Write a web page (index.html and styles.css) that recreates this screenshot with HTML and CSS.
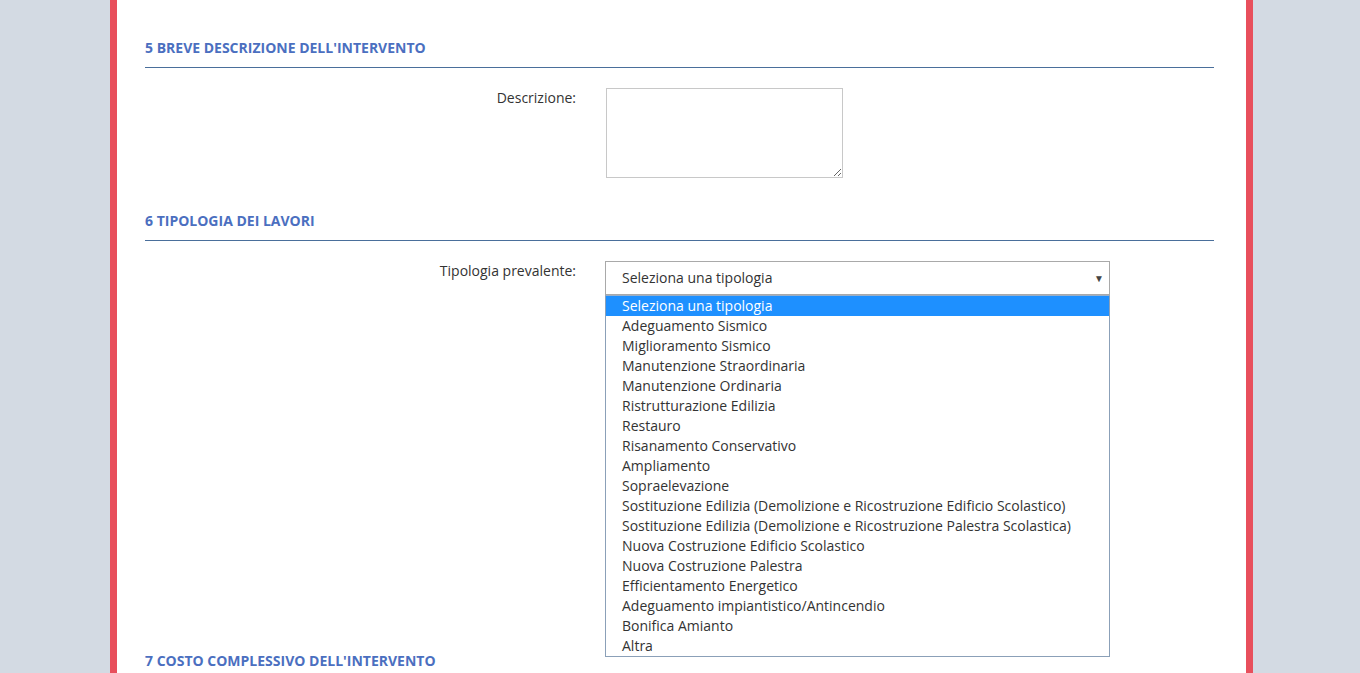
FILE: index.html
```html
<!DOCTYPE html>
<html lang="it">
<head>
    <meta charset="UTF-8">
    <title>Scheda intervento</title>
    <link rel="stylesheet" href="styles.css">
</head>
<body>
    <div class="page">
        <div class="section">
            <h2 class="section-title">5 Breve descrizione dell'intervento</h2>
            <div class="form-row">
                <label class="form-label" for="descrizione">Descrizione:</label>
                <textarea id="descrizione" class="form-textarea"></textarea>
            </div>
        </div>

        <div class="section section-tipologia">
            <h2 class="section-title">6 Tipologia dei lavori</h2>
            <div class="form-row">
                <label class="form-label">Tipologia prevalente:</label>
                <div class="select-wrap">
                    <div class="select-box">
                        <span>Seleziona una tipologia</span>
                        <span class="select-arrow">&#9660;</span>
                    </div>
                    <!-- lista aperta del menu a tendina -->
                    <ul class="select-list">
                        <li class="selected">Seleziona una tipologia</li>
                        <li>Adeguamento Sismico</li>
                        <li>Miglioramento Sismico</li>
                        <li>Manutenzione Straordinaria</li>
                        <li>Manutenzione Ordinaria</li>
                        <li>Ristrutturazione Edilizia</li>
                        <li>Restauro</li>
                        <li>Risanamento Conservativo</li>
                        <li>Ampliamento</li>
                        <li>Sopraelevazione</li>
                        <li>Sostituzione Edilizia (Demolizione e Ricostruzione Edificio Scolastico)</li>
                        <li>Sostituzione Edilizia (Demolizione e Ricostruzione Palestra Scolastica)</li>
                        <li>Nuova Costruzione Edificio Scolastico</li>
                        <li>Nuova Costruzione Palestra</li>
                        <li>Efficientamento Energetico</li>
                        <li>Adeguamento impiantistico/Antincendio</li>
                        <li>Bonifica Amianto</li>
                        <li>Altra</li>
                    </ul>
                </div>
            </div>
        </div>

        <div class="section section-last">
            <h2 class="section-title">7 Costo complessivo dell'intervento</h2>
        </div>
    </div>
</body>
</html>
```

FILE: styles.css
```css
/* Genel stiller */
body {
    margin: 0;
    font-family: "Open Sans", "Liberation Sans", sans-serif;
    font-size: 14px;
    color: #333;
    background-color: #d3dae3;
    overflow: hidden;
}

/* contenitore centrale con bordi rossi */
.page {
    box-sizing: border-box;
    width: 1143px;
    min-height: 673px;
    margin-left: 110px;
    padding: 39px 32px 0 28px;
    background-color: #fff;
    border-left: 7px solid #e84f5c;
    border-right: 7px solid #e84f5c;
}

.section {
    margin-bottom: 34px;
}

.section-tipologia {
    margin-bottom: 357px;
}

.section-last {
    margin-bottom: 0;
}

.section-title {
    margin: 0;
    padding-bottom: 10px;
    font-size: 14px;
    line-height: 18px;
    font-weight: bold;
    text-transform: uppercase;
    color: #4b6fc0;
    border-bottom: 1px solid #4a6f9b;
}

/* righe del modulo */
.form-row {
    display: grid;
    grid-template-columns: 431px auto;
    column-gap: 30px;
    align-items: start;
    margin-top: 20px;
}

.form-label {
    text-align: right;
    line-height: 20px;
}

.form-textarea {
    box-sizing: border-box;
    width: 237px;
    height: 90px;
    margin: 0;
    border: 1px solid #c8c8c8;
    font-family: inherit;
    font-size: 14px;
}

/* select finto, aperto */
.select-wrap {
    position: relative;
    margin-left: -1px;
    width: 505px;
}

.select-box {
    box-sizing: border-box;
    display: flex;
    justify-content: space-between;
    align-items: center;
    height: 34px;
    padding: 0 5px 0 16px;
    border: 1px solid #a9a9a9;
    background-color: #fff;
    line-height: 20px;
}

.select-arrow {
    font-size: 10px;
    color: #444;
}

.select-list {
    position: absolute;
    top: 34px;
    left: 0;
    right: 0;
    margin: 0;
    padding: 0;
    list-style: none;
    background-color: #fff;
    border: 1px solid #8ba0b8;
    border-top: 1px solid #9aaec6;
}

.select-list li {
    height: 20px;
    line-height: 20px;
    padding-left: 16px;
    white-space: nowrap;
}

.select-list li.selected {
    background-color: #1e90ff;
    color: #fff;
}
```
